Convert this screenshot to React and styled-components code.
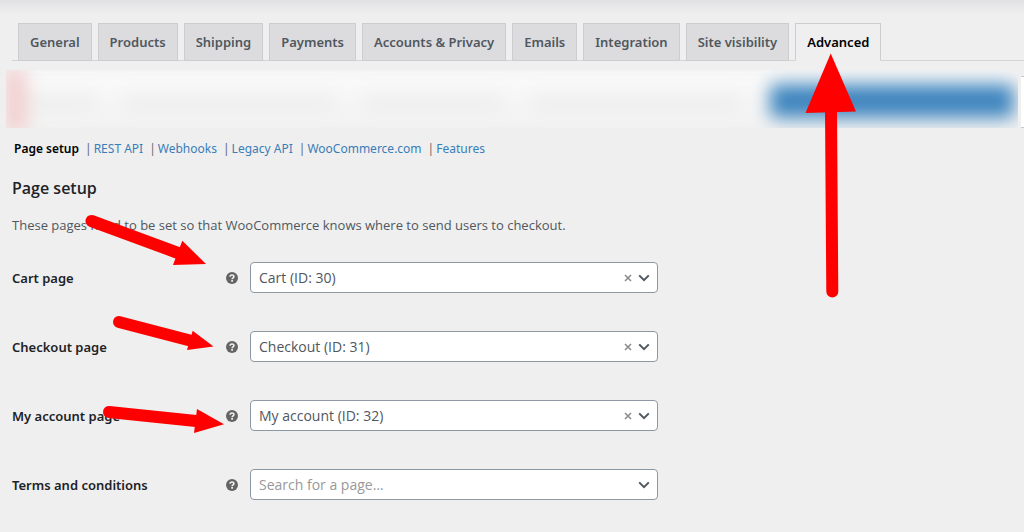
import React from "react";
import styled, { createGlobalStyle } from "styled-components";

const GlobalStyle = createGlobalStyle`
  * { box-sizing: border-box; }
  html { min-height: 100%; background: #efefef; }
  body {
    margin: 0;
    overflow-x: hidden;
    background: #efefef;
    color: #1d2327;
    font-family: "Noto Sans", "Open Sans", sans-serif;
    font-size: 13px;
    line-height: 20px;
  }
`;

const Page = styled.div`
  position: relative;
  overflow: hidden;
  padding-bottom: 30px;
`;

const TopShade = styled.div`
  height: 14px;
  background: linear-gradient(#e1e1e5, #efefef);
`;

const Tabs = styled.nav`
  display: flex;
  gap: 6px;
  margin: 9px 0 0 12px;
  padding-left: 6px;
  border-bottom: 1px solid #d4d4d6;
`;

const Tab = styled.a`
  padding: 8px 11px;
  margin-bottom: -1px;
  border: 1px solid #cdcdcf;
  border-bottom-color: ${(p) => (p.$active ? "#efefef" : "#cdcdcf")};
  background: ${(p) => (p.$active ? "#efefef" : "#dcdcde")};
  color: ${(p) => (p.$active ? "#000" : "#50575e")};
  font-weight: 600;
  white-space: nowrap;
  text-decoration: none;
`;

const NoticeRow = styled.div`
  display: flex;
  gap: 3px;
  height: 58px;
  margin: 9px 0 0 6px;
`;

const BlurredNotice = styled.div`
  flex: 1;
  overflow: hidden;
  background: #f1f1f1;
`;

const NoticeBody = styled.div`
  display: flex;
  align-items: center;
  gap: 28px;
  height: 62px;
  padding-right: 4px;
  border-left: 20px solid #f3cccd;
  background: linear-gradient(#fbfbfb, #f0f0f0);
  filter: blur(9px);
`;

const FaintLine = styled.span`
  flex: ${(p) => p.$grow};
  height: 14px;
  border-radius: 6px;
  background: #ededed;
`;

const BlueBar = styled.span`
  flex: none;
  width: 244px;
  height: 34px;
  border-radius: 4px;
  background: #3f86bf;
`;

const NoticeEdge = styled.div`
  width: 3px;
  margin-top: 6px;
  border: solid #c9c9cb;
  border-width: 1px 0;
  background: #fff;
`;

const Sections = styled.ul`
  display: flex;
  margin: 11px 0 0 14px;
  padding: 0;
  list-style: none;
  font-size: 12px;
`;

const Section = styled.li`
  & + &::before {
    content: "|";
    margin: 0 2px 0 6px;
    color: #646970;
  }
`;

const SectionLink = styled.a`
  color: ${(p) => (p.$current ? "#000" : "#3a7db8")};
  font-weight: ${(p) => (p.$current ? 600 : 400)};
  text-decoration: none;
`;

const Settings = styled.main`
  padding-left: 12px;
`;

const Heading = styled.h2`
  margin: 17px 0 0;
  font-family: "Open Sans", sans-serif;
  font-size: 16px;
  line-height: 24px;
  font-weight: 600;
`;

const Description = styled.p`
  margin: 15px 0 27px;
  font-family: "Open Sans", sans-serif;
  color: #50575e;
`;

const Form = styled.form`
  display: grid;
  gap: 38px;
`;

const Row = styled.div`
  display: grid;
  grid-template-columns: 214px 24px minmax(0, 408px);
  align-items: center;
`;

const Label = styled.label`
  font-weight: 600;
`;

const HelpIcon = styled.svg`
  width: 12px;
  height: 12px;
  display: block;
`;

const SelectBox = styled.div`
  position: relative;
`;

const Select = styled.select`
  display: block;
  appearance: none;
  width: 100%;
  height: 31px;
  padding: 0 50px 0 8px;
  border: 1px solid #8c98a4;
  border-radius: 4px;
  background: #fff;
  color: ${(p) => (p.$empty ? "#999" : "#50575e")};
  font-family: "Open Sans", sans-serif;
  font-size: 14px;
`;

const Clear = styled.button`
  position: absolute;
  top: 8px;
  right: 22px;
  width: 16px;
  height: 16px;
  padding: 4px;
  border: 0;
  background: none;
  color: #8a8a8a;
`;

const Glyph = styled.svg`
  display: block;
  width: 8px;
  height: 8px;
`;

const Chevron = styled.svg`
  position: absolute;
  top: 12px;
  right: 8px;
  width: 12px;
  height: 8px;
  pointer-events: none;
`;

const Arrows = styled.svg`
  position: absolute;
  top: 0;
  left: 0;
  pointer-events: none;
`;

const tabs = [
  "General", "Products", "Shipping", "Payments", "Accounts & Privacy",
  "Emails", "Integration", "Site visibility", "Advanced",
];

const sections = [
  "Page setup", "REST API", "Webhooks", "Legacy API", "WooCommerce.com", "Features",
];

const fields = [
  { id: "cart", label: "Cart page", value: "Cart (ID: 30)" },
  { id: "checkout", label: "Checkout page", value: "Checkout (ID: 31)" },
  { id: "account", label: "My account page", value: "My account (ID: 32)" },
  { id: "terms", label: "Terms and conditions", placeholder: "Search for a page…" },
];

const arrows = [
  { shaft: "M91.5 221L178 253", head: "M182.3 240.7L206 264L173 265Z" },
  { shaft: "M119 322L190 340.5", head: "M192.7 330.7L213.5 346.5L187 350Z" },
  { shaft: "M109 412L196 421", head: "M197 409L224 424.3L194 433Z" },
  { shaft: "M832.3 291.5L831 111", head: "M830.7 53.5L856 111.5L805.5 113Z" },
];

function Help() {
  return (
    <HelpIcon viewBox="0 0 12 12" aria-hidden="true">
      <circle cx="6" cy="6" r="6" fill="#646464" />
      <path
        d="M4.1 4.8C4.1 2.3 8 2.4 7.9 4.6C7.8 5.8 6.1 5.8 6.1 7.2"
        fill="none" stroke="#efefef" strokeWidth="1.6"
      />
      <rect x="5.2" y="8" width="1.8" height="1.7" fill="#efefef" />
    </HelpIcon>
  );
}

function PageField({ id, label, value, placeholder }) {
  return (
    <Row>
      <Label htmlFor={id}>{label}</Label>
      <Help />
      <SelectBox>
        <Select id={id} $empty={!value}>
          <option>{value || placeholder}</option>
        </Select>
        {value && (
          <Clear type="button" aria-label={`Clear ${label}`}>
            <Glyph viewBox="0 0 8 8">
              <path d="M1 1L7 7M7 1L1 7" stroke="currentColor" strokeWidth="1.5" />
            </Glyph>
          </Clear>
        )}
        <Chevron viewBox="0 0 12 8">
          <path d="M1.2 1.4L6 6.2L10.8 1.4" fill="none" stroke="#50575e" strokeWidth="2" />
        </Chevron>
      </SelectBox>
    </Row>
  );
}

export default function App() {
  return (
    <>
      <GlobalStyle />
      <Page>
        <TopShade />
        <Tabs>
          {tabs.map((t) => (
            <Tab key={t} href="#" $active={t === "Advanced"}>{t}</Tab>
          ))}
        </Tabs>
        <NoticeRow>
          <BlurredNotice>
            <NoticeBody>
              <FaintLine $grow={1} />
              <FaintLine $grow={3} />
              <FaintLine $grow={2} />
              <FaintLine $grow={3} />
              <BlueBar />
            </NoticeBody>
          </BlurredNotice>
          <NoticeEdge />
        </NoticeRow>
        <Sections>
          {sections.map((s, i) => (
            <Section key={s}>
              <SectionLink href="#" $current={i === 0}>{s}</SectionLink>
            </Section>
          ))}
        </Sections>
        <Settings>
          <Heading>Page setup</Heading>
          <Description>
            These pages need to be set so that WooCommerce knows where to send users to checkout.
          </Description>
          <Form>
            {fields.map((f) => <PageField key={f.id} {...f} />)}
          </Form>
        </Settings>
        <Arrows width="900" height="450" viewBox="0 0 900 450" aria-hidden="true">
          {arrows.map((a) => (
            <g key={a.shaft}>
              <path d={a.shaft} stroke="#f00" strokeWidth="12" strokeLinecap="round" />
              <path d={a.head} fill="#f00" />
            </g>
          ))}
        </Arrows>
      </Page>
    </>
  );
}
